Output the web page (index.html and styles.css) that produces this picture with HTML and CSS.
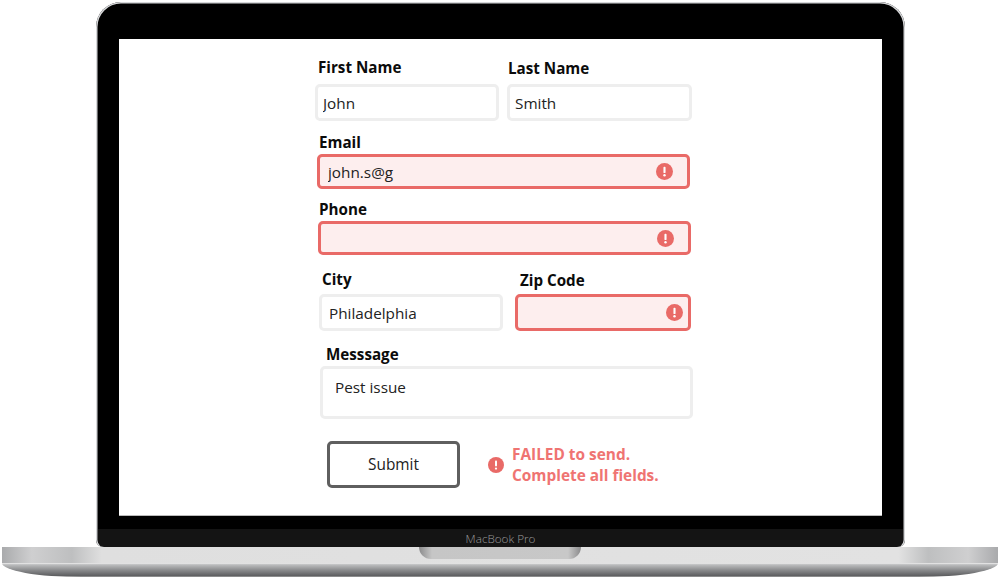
FILE: index.html
```html
<!DOCTYPE html>
<html lang="en">
<head>
  <meta charset="UTF-8">
  <meta name="viewport" content="width=device-width, initial-scale=1.0">
  <title>Contact form on a laptop</title>
  <link rel="stylesheet" href="styles.css">
</head>
<body>
  <svg class="defs" width="0" height="0">
    <symbol id="alert" viewBox="0 0 16 16">
      <circle cx="8" cy="8" r="8" fill="#e96a67"/>
      <rect x="7" y="3.6" width="2" height="5.8" rx="0.8" fill="#fff"/>
      <circle cx="8" cy="11.6" r="1.15" fill="#fff"/>
    </symbol>
  </svg>

  <div class="laptop">
    <div class="lid">
      <div class="screen">
        <form id="userForm" class="form">
          <div class="row row-name">
            <div class="field field-first">
              <label for="first">First Name</label>
              <div class="box"><input type="text" id="first" value="John"></div>
            </div>
            <div class="field field-last">
              <label for="last">Last Name</label>
              <div class="box"><input type="text" id="last" value="Smith"></div>
            </div>
          </div>

          <div class="field field-email">
            <label for="email">Email</label>
            <div class="box error">
              <input type="text" id="email" value="john.s@g">
              <svg class="icon"><use href="#alert"/></svg>
            </div>
          </div>

          <div class="field field-phone">
            <label for="phone">Phone</label>
            <div class="box error">
              <input type="text" id="phone">
              <svg class="icon"><use href="#alert"/></svg>
            </div>
          </div>

          <div class="row row-city">
            <div class="field field-city">
              <label for="city">City</label>
              <div class="box"><input type="text" id="city" value="Philadelphia"></div>
            </div>
            <div class="field field-zip">
              <label for="zip">Zip Code</label>
              <div class="box error">
                <input type="text" id="zip">
                <svg class="icon"><use href="#alert"/></svg>
              </div>
            </div>
          </div>

          <div class="field field-message">
            <label for="message">Messsage</label>
            <div class="box"><textarea id="message">Pest issue</textarea></div>
          </div>

          <div class="actions">
            <button type="submit">Submit</button>
            <svg class="icon icon-status"><use href="#alert"/></svg>
            <p class="status">FAILED to send.<br>Complete all fields.</p>
          </div>
        </form>
      </div>
      <div class="chin">MacBook Pro</div>
    </div>
    <div class="base">
      <div class="deck"><div class="notch"></div></div>
      <div class="lip"></div>
    </div>
  </div>
</body>
</html>
```

FILE: styles.css
```css
* {
  box-sizing: border-box;
}

body {
  font-family: "Open Sans", Arial, sans-serif;
  background-color: #fff;
  margin: 0;
  padding: 0;
  overflow: hidden;
}

.defs {
  display: block;
  height: 0;
}

.laptop {
  width: 1000px;
  height: 578px;
  padding-top: 2px;
}

/* lid */
.lid {
  width: 809px;
  height: 545px;
  margin-left: 96px;
  padding-top: 37px;
  background-color: #000;
  border-radius: 25px 25px 7px 7px;
  box-shadow: inset 0 0 0 1.5px #d6d7d9;
}

.screen {
  width: 763px;
  height: 477px;
  margin-left: 23px;
  background-color: #fff;
  border-bottom: 1px solid #bbb;
}

.chin {
  height: 18px;
  margin: 13px 2px 0;
  background-color: #141414;
  border-radius: 0 0 6px 6px;
  color: #9a9a9a;
  font-size: 11.7px;
  font-weight: 300;
  line-height: 18px;
  text-align: center;
}

/* base */
.deck {
  display: flex;
  justify-content: center;
  height: 16px;
  margin: 0 2px;
  background: linear-gradient(90deg, #a9aaac 0, #cfcfd0 3%, #bebfc0 7%, #dfdfdf 10%, #e2e2e2 90%, #bebfc0 93%, #cfcfd0 97%, #a9aaac 100%);
}

.notch {
  width: 162px;
  height: 12px;
  background: linear-gradient(90deg, #8b8b8c 0, #c6c6c6 8%, #c8c8c8 92%, #8b8b8c 100%);
  border-radius: 0 0 12px 12px;
}

.lip {
  height: 14px;
  margin: 0 2px;
  background: linear-gradient(180deg, #f0f0f0 0, #bdbebf 12%, #858688 55%, #5f6062 90%, #a5a5a5 100%);
  border-radius: 0 0 80px 80px / 0 0 14px 14px;
}

/* form */
.form {
  padding-top: 17px;
}

.row {
  display: flex;
}

label {
  display: block;
  font-size: 15.2px;
  font-weight: 700;
  line-height: 22px;
  color: #0b0b0b;
}

.box {
  display: flex;
  align-items: center;
  height: 37px;
  background-color: #fff;
  border: 3px solid #eeeeee;
  border-radius: 5px;
}

.box.error {
  background-color: #fdeeee;
  border-color: #e96a67;
}

input, textarea {
  flex: 1;
  min-width: 0;
  height: 100%;
  padding: 0;
  border: none;
  outline: none;
  background: none;
  font-family: inherit;
  font-size: 15.3px;
  color: #222;
}

textarea {
  resize: none;
  overflow: hidden;
  line-height: 22px;
}

.icon {
  flex: none;
  width: 17px;
  height: 17px;
  margin-right: 14px;
}

.field-first {
  width: 184px;
  margin-left: 196px;
}

.field-first label {
  margin-left: 3px;
  margin-bottom: 6px;
}

.field-first input {
  padding-left: 5px;
}

.field-last {
  width: 185px;
  margin-left: 8px;
}

.field-last label {
  margin-left: 1px;
  padding-top: 1px;
  margin-bottom: 5px;
}

.field-last input {
  padding-left: 5px;
}

.field-email {
  width: 373px;
  margin: 10px 0 0 198px;
}

.field-email label {
  margin-left: 2px;
  margin-bottom: 1px;
}

.field-email .box {
  height: 35px;
}

.field-email input {
  padding-left: 8px;
}

.field-phone {
  width: 373px;
  margin: 9px 0 0 199px;
}

.field-phone label {
  margin-left: 1px;
  margin-bottom: 1px;
}

.field-phone .box {
  height: 34px;
}

.row-city {
  margin-top: 13px;
}

.field-city {
  width: 184px;
  margin-left: 200px;
}

.field-city label {
  margin-left: 3px;
  margin-bottom: 4px;
}

.field-city input {
  padding-left: 7px;
}

.field-zip {
  width: 176px;
  margin-left: 12px;
}

.field-zip label {
  margin-left: 5px;
  padding-top: 1px;
  margin-bottom: 3px;
}

.field-zip .icon {
  margin-right: 5px;
}

.field-message {
  width: 373px;
  margin: 12px 0 0 201px;
}

.field-message label {
  margin-left: 6px;
  margin-bottom: 1px;
}

.field-message .box {
  height: 53px;
}

.field-message textarea {
  padding: 7px 0 0 12px;
}

.actions {
  display: flex;
  align-items: center;
  margin: 22px 0 0 208px;
}

button {
  width: 133px;
  height: 47px;
  padding: 0;
  background-color: #fff;
  border: 3px solid #5f5f5f;
  border-radius: 5px;
  font-family: inherit;
  font-size: 15.4px;
  color: #222;
  cursor: pointer;
}

.icon-status {
  width: 16px;
  height: 16px;
  margin: 0 8px 0 28px;
}

.status {
  margin: 0;
  font-size: 15.4px;
  font-weight: 700;
  line-height: 21px;
  color: #ef7472;
}
```
